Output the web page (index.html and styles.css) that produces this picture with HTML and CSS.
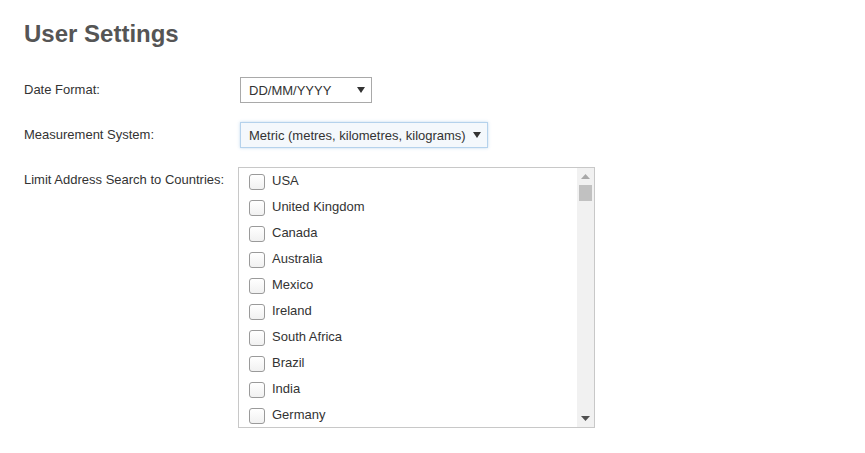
FILE: index.html
```html
<!DOCTYPE html>
<html>
<head>
<meta charset="utf-8">
<link rel="stylesheet" href="styles.css">
</head>
<body>
<div class="page">
  <h1 class="title">User Settings</h1>
  <div class="form">
    <div class="row">
      <label class="label">Date Format:</label>
      <div class="select select-date">
        <span class="select-text">DD/MM/YYYY</span>
        <svg class="arrow" width="8" height="6" viewBox="0 0 8 6"><polygon points="0,0 8,0 4,6" fill="#333"/></svg>
      </div>
    </div>
    <div class="row">
      <label class="label">Measurement System:</label>
      <div class="select select-focus">
        <span class="select-text">Metric (metres, kilometres, kilograms)</span>
        <svg class="arrow" width="8" height="6" viewBox="0 0 8 6"><polygon points="0,0 8,0 4,6" fill="#333"/></svg>
      </div>
    </div>
    <div class="row row-top">
      <label class="label label-list">Limit Address Search to Countries:</label>
      <div class="listbox">
        <ul class="items">
          <li class="item"><span class="check"></span><span>USA</span></li>
          <li class="item"><span class="check"></span><span>United Kingdom</span></li>
          <li class="item"><span class="check"></span><span>Canada</span></li>
          <li class="item"><span class="check"></span><span>Australia</span></li>
          <li class="item"><span class="check"></span><span>Mexico</span></li>
          <li class="item"><span class="check"></span><span>Ireland</span></li>
          <li class="item"><span class="check"></span><span>South Africa</span></li>
          <li class="item"><span class="check"></span><span>Brazil</span></li>
          <li class="item"><span class="check"></span><span>India</span></li>
          <li class="item"><span class="check"></span><span>Germany</span></li>
        </ul>
        <div class="scrollbar">
          <svg class="sb-arrow" width="9" height="5" viewBox="0 0 9 5"><polygon points="0,5 9,5 4.5,0" fill="#a8a8a8"/></svg>
          <div class="sb-thumb"></div>
          <div class="sb-track"></div>
          <svg class="sb-arrow" width="9" height="5" viewBox="0 0 9 5"><polygon points="0,0 9,0 4.5,5" fill="#505050"/></svg>
        </div>
      </div>
    </div>
  </div>
</div>
</body>
</html>
```

FILE: styles.css
```css
html, body {
  margin: 0;
  padding: 0;
  background: #fff;
}
body {
  font-family: "Liberation Sans", Arial, sans-serif;
  font-size: 13px;
  color: #333;
}
.page {
  padding: 20px 24px;
}
.title {
  margin: 0;
  font-size: 24px;
  line-height: 28px;
  font-weight: bold;
  color: #555;
}
.form {
  display: flex;
  flex-direction: column;
  gap: 19px;
  margin-top: 29px;
}
.row {
  display: flex;
  align-items: center;
}
.row-top {
  align-items: flex-start;
}
.label {
  width: 216px;
  flex: none;
  line-height: 16px;
}
.label-list {
  width: 214px;
  padding-top: 5px;
}
.select {
  display: flex;
  align-items: center;
  justify-content: space-between;
  box-sizing: border-box;
  height: 26px;
  padding: 0 6px 0 8px;
  border: 1px solid #a9a9a9;
  background: #fff;
  color: #333;
}
.select-date {
  width: 132px;
}
.select-focus {
  width: 248px;
  background: #f4f8fc;
  border-color: #b5d2ec;
  box-shadow: 0 0 3px rgba(120, 170, 220, 0.45);
}
.select-text {
  white-space: nowrap;
}
.arrow {
  display: block;
  flex: none;
}
.listbox {
  display: flex;
  width: 357px;
  height: 261px;
  box-sizing: border-box;
  border: 1px solid #c8c8c8;
  background: #fff;
  overflow: hidden;
}
.items {
  flex: 1;
  list-style: none;
  margin: 0;
  padding: 0 0 0 10px;
  overflow: hidden;
}
.item {
  display: flex;
  align-items: center;
  gap: 7px;
  height: 26px;
  white-space: nowrap;
}
.item span:last-child {
  margin-top: -2px;
}
.check {
  box-sizing: border-box;
  width: 16px;
  height: 16px;
  margin-top: 1px;
  border: 1px solid #9a9a9a;
  border-radius: 3px;
  background: linear-gradient(#fff, #f1f1f1);
  flex: none;
}
.scrollbar {
  width: 17px;
  flex: none;
  background: #f1f1f1;
  display: flex;
  flex-direction: column;
  align-items: center;
}
.sb-arrow {
  display: block;
  margin: 6px 0;
}
.sb-thumb {
  width: 13px;
  height: 16px;
  background: #c1c1c1;
}
.sb-track {
  flex: 1;
}
```
